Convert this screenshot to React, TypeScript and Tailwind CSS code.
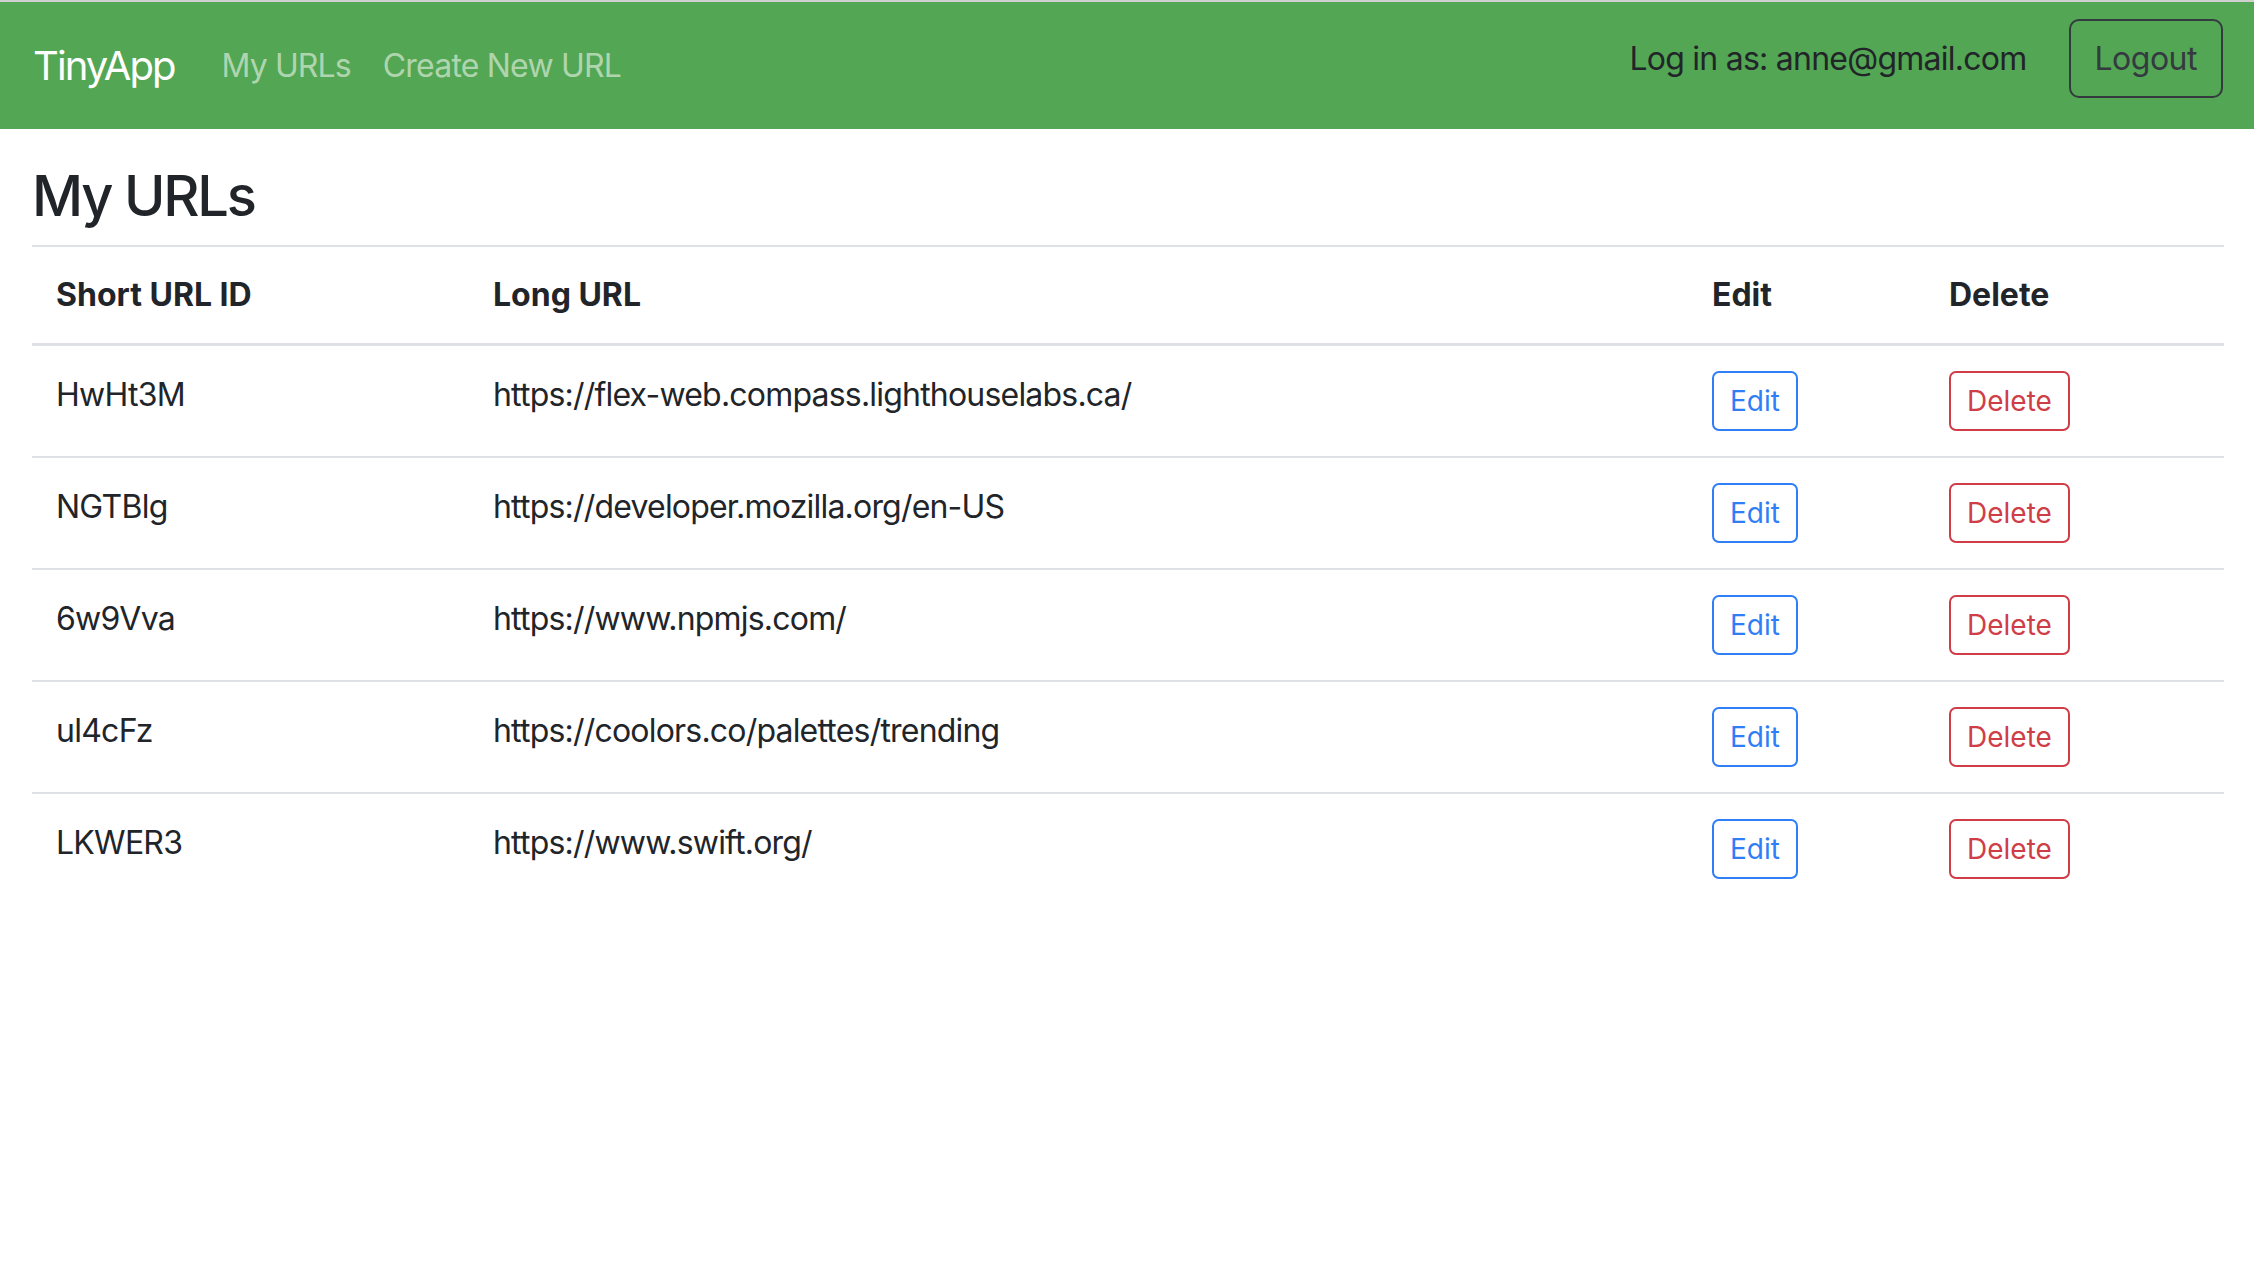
import React from "react";

const rows = [
  { id: "HwHt3M", url: "https://flex-web.compass.lighthouselabs.ca/" },
  { id: "NGTBlg", url: "https://developer.mozilla.org/en-US" },
  { id: "6w9Vva", url: "https://www.npmjs.com/" },
  { id: "ul4cFz", url: "https://coolors.co/palettes/trending" },
  { id: "LKWER3", url: "https://www.swift.org/" },
];

export default function App() {
  return (
    <div className="min-h-screen bg-white text-[#212529] font-['Inter','Liberation_Sans',sans-serif]">
      <nav className="flex h-[129px] items-center border-t-2 border-[#d0d0d0] bg-[#53a653] pl-[33px] pr-[31px]">
        <span className="text-[40px] leading-[60px] tracking-[-1.9px] text-white">TinyApp</span>
        <div className="ml-[31px] flex items-center">
          <a className="px-[16px] text-[32px] leading-[48px] tracking-[-0.9px] text-[rgba(255,255,255,0.55)]">My URLs</a>
          <a className="px-[16px] text-[32px] leading-[48px] tracking-[-0.8px] text-[rgba(255,255,255,0.55)]">Create New URL</a>
        </div>
        <div className="ml-auto mb-[14px] flex items-center gap-[42px]">
          <span className="text-[32px] leading-[48px] tracking-[-0.75px] text-[#212529]">Log in as: anne@gmail.com</span>
          <button className="h-[79px] rounded-[10px] border-2 border-[#343a40] px-[24px] text-[32px] leading-[48px] tracking-[-0.5px] text-[#343a40]">
            Logout
          </button>
        </div>
      </nav>
      <main className="pl-[32px] pr-[30px]">
        <h1 className="mt-[34px] mb-[15px] text-[56px] font-medium leading-[67px] tracking-[-2.2px]">My URLs</h1>
        <table className="w-full table-fixed border-collapse border-t-2 border-[#dee2e6] text-[32px] leading-[48px]">
          <colgroup>
            <col className="w-[437px]" />
            <col className="w-[1219px]" />
            <col className="w-[237px]" />
            <col />
          </colgroup>
          <thead>
            <tr className="border-b-[3px] border-[#dee2e6]">
              <th className="px-[24px] py-[24px] text-left font-bold">Short URL ID</th>
              <th className="px-[24px] py-[24px] text-left font-bold">Long URL</th>
              <th className="px-[24px] py-[24px] text-left font-bold">Edit</th>
              <th className="px-[24px] py-[24px] text-left font-bold">Delete</th>
            </tr>
          </thead>
          <tbody>
            {rows.map((r, i) => (
              <tr key={r.id} className={i < rows.length - 1 ? "border-b-2 border-[#dee2e6]" : ""}>
                <td className="px-[24px] pt-[25px] pb-[25px] align-top tracking-[-0.75px]">{r.id}</td>
                <td className="px-[24px] pt-[25px] pb-[25px] align-top tracking-[-0.8px]">{r.url}</td>
                <td className="px-[24px] pt-[25px] pb-[25px] align-top">
                  <button className="flex h-[60px] items-center rounded-[7px] border-2 border-[#2f7ef5] px-[16px] text-[28px] leading-[42px] text-[#2f7ef5]">
                    Edit
                  </button>
                </td>
                <td className="px-[24px] pt-[25px] pb-[25px] align-top">
                  <button className="flex h-[60px] items-center rounded-[7px] border-2 border-[#cf3d47] px-[16px] text-[28px] leading-[42px] text-[#cf3d47]">
                    Delete
                  </button>
                </td>
              </tr>
            ))}
          </tbody>
        </table>
      </main>
    </div>
  );
}
